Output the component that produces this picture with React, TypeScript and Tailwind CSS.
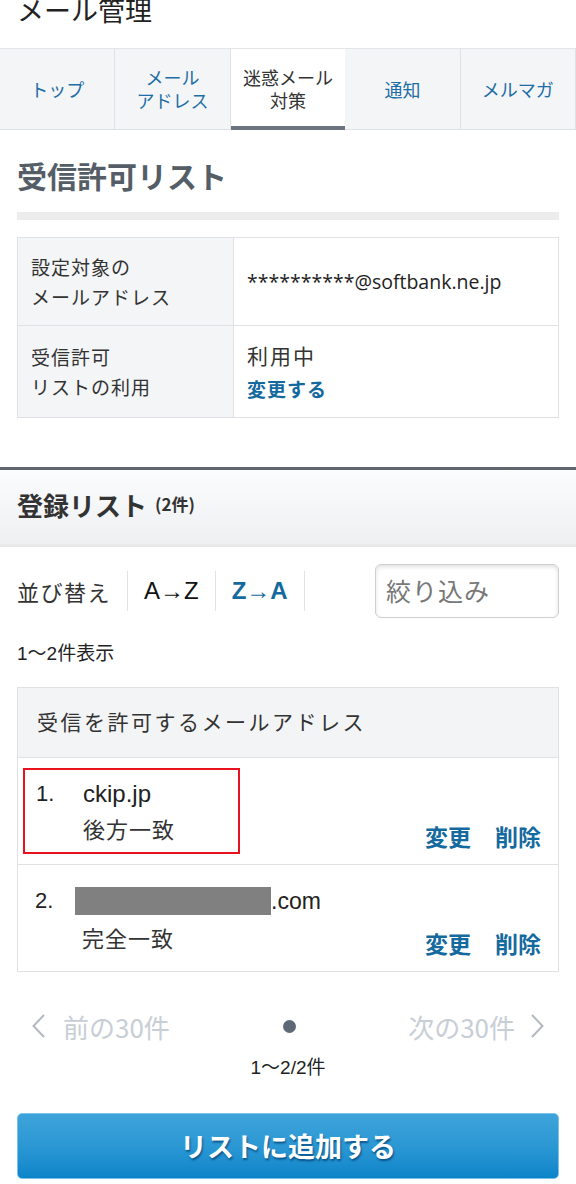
const jp = "font-['Noto_Sans_CJK_JP','Noto_Sans',sans-serif]";

const tabs = [
  { label: ["トップ"], active: false },
  { label: ["メール", "アドレス"], active: false },
  { label: ["迷惑メール", "対策"], active: true },
  { label: ["通知"], active: false },
  { label: ["メルマガ"], active: false },
];

function Links() {
  return (
    <div className="self-end mb-[13px] flex gap-[24px] text-[23px] leading-[30px] font-bold text-[#146a9e]">
      <span>変更</span>
      <span>削除</span>
    </div>
  );
}

export default function App() {
  return (
    <div className={`${jp} w-[576px] bg-white text-[#333] overflow-hidden`}>
      {/* page title (scrolled) */}
      <div className="h-[48px] overflow-hidden">
        <h1 className="-mt-[10px] pl-[17px] text-[27px] leading-[40px] text-[#222]">メール管理</h1>
      </div>

      {/* tabs */}
      <div className="flex h-[82px] border-t border-[#e3e5e8]">
        {tabs.map((t, i) => (
          <div
            key={i}
            className={
              t.active
                ? "flex-1 flex flex-col items-center justify-center bg-white border-b-[4px] border-[#6b7480] text-[#333] text-[18px] leading-[23px] pt-[2px]"
                : "flex-1 flex flex-col items-center justify-center bg-[#f4f5f7] border-r border-b border-[#dfe2e5] text-[#1d6ea5] text-[18px] leading-[23px]"
            }
          >
            {t.label.map((l) => (
              <span key={l}>{l}</span>
            ))}
          </div>
        ))}
      </div>

      {/* heading */}
      <div className="px-[17px]">
        <h2 className="mt-[25px] text-[30px] leading-[40px] font-bold text-[#555d67]">受信許可リスト</h2>
        <div className="mt-[17px] h-[8px] bg-[#ececec]" />

        <div className="mt-[17px] border border-[#dfe1e4]">
          <div className="flex h-[88px] border-b border-[#dfe1e4]">
            <div className="w-[216px] bg-[#f4f5f7] border-r border-[#dfe1e4] pl-[13px] flex flex-col justify-center text-[19px] tracking-[1px] leading-[30px] text-[#333]">
              <span>設定対象の</span>
              <span>メールアドレス</span>
            </div>
            <div className="flex-1 flex items-center pl-[13px] text-[19.5px] text-[#222] font-['Open_Sans',sans-serif]">
              **********@softbank.ne.jp
            </div>
          </div>
          <div className="flex h-[91px]">
            <div className="w-[216px] bg-[#f4f5f7] border-r border-[#dfe1e4] pl-[13px] flex flex-col justify-center text-[19px] tracking-[1px] leading-[30px] text-[#333]">
              <span>受信許可</span>
              <span>リストの利用</span>
            </div>
            <div className="flex-1 flex flex-col justify-center pl-[13px] leading-[33px]">
              <span className="text-[21px] tracking-[2px] text-[#333]">利用中</span>
              <span className="text-[19px] tracking-[1px] font-bold text-[#146a9e]">変更する</span>
            </div>
          </div>
        </div>
      </div>

      {/* registered list header */}
      <div className="mt-[49px] h-[80px] border-t-[3px] border-[#5f6670] border-b-[3px] border-b-[#e9e9e9] bg-gradient-to-b from-[#fbfcfd] to-[#eef0f2] flex items-center px-[17px] pb-[6px]">
        <span className="text-[26px] font-bold text-[#333]">登録リスト</span>
        <span className="ml-[8px] text-[17px] font-bold text-[#333]">(2件)</span>
      </div>

      {/* sort & filter */}
      <div className="mt-[17px] px-[17px] flex items-center h-[54px]">
        <span className="text-[22px] tracking-[1.5px] text-[#333] pr-[16px] border-r border-[#e3e3e3] leading-[40px]">並び替え</span>
        <span className="text-[24px] text-[#111] px-[16px] border-r border-[#e3e3e3] leading-[40px] font-['Liberation_Sans',sans-serif]">A→Z</span>
        <span className="text-[24px] font-bold text-[#146a9e] px-[16px] border-r border-[#e3e3e3] leading-[40px] font-['Liberation_Sans',sans-serif]">Z→A</span>
        <div className="ml-auto w-[184px] h-[54px] rounded-[6px] border border-[#cfcfcf] shadow-[inset_0_2px_4px_rgba(0,0,0,0.12)] flex items-center px-[10px] text-[25px] tracking-[1px] text-[#777]">
          絞り込み
        </div>
      </div>

      <div className="mt-[22px] px-[17px] text-[19px] text-[#222] font-['Liberation_Sans','Noto_Sans_CJK_JP',sans-serif]">1〜2件表示</div>

      {/* list */}
      <div className="mx-[17px] mt-[18px] border border-[#dfe1e4]">
        <div className="h-[70px] bg-[#f3f4f6] border-b border-[#dfe1e4] flex items-center pl-[19px] text-[21px] tracking-[2.5px] text-[#333]">
          受信を許可するメールアドレス
        </div>
        <div className="h-[107px] border-b border-[#dfe1e4] flex justify-between pl-[5px] pr-[17px] pt-[10px]">
          <div className="w-[217px] h-[86px] border-2 border-[#e8121e] flex flex-col justify-center pl-[11px]">
            <div className="flex items-center text-[24px] leading-[35px] text-[#222] font-['Liberation_Sans',sans-serif]">
              <span className="w-[47px] text-[22px]">1.</span>
              <span>ckip.jp</span>
            </div>
            <div className="pl-[47px] text-[22px] tracking-[1px] leading-[35px] text-[#333]">後方一致</div>
          </div>
          <Links />
        </div>
        <div className="h-[106px] flex justify-between px-[17px] pt-[18px]">
          <div className="flex flex-col">
            <div className="flex items-center text-[23px] leading-[36px] text-[#222] font-['Liberation_Sans',sans-serif]">
              <span className="w-[40px] text-[22px]">2.</span>
              <span className="inline-block w-[196px] h-[28px] bg-[#808080]" />
              <span>.com</span>
            </div>
            <div className="pl-[47px] text-[22px] tracking-[1px] leading-[36px] text-[#333]">完全一致</div>
          </div>
          <Links />
        </div>
      </div>

      {/* pagination */}
      <div className="mt-[35px] px-[32px] flex items-center justify-between text-[26px] text-[#c8ced5]">
        <div className="flex items-center gap-[18px]">
          <svg width="13" height="24" viewBox="0 0 13 24" fill="none" stroke="#b3b9c1" strokeWidth="2">
            <path d="M12 1 L1.5 12 L12 23" />
          </svg>
          <span>前の30件</span>
        </div>
        <span className="w-[13px] h-[13px] rounded-full bg-[#5d6977]" />
        <div className="flex items-center gap-[16px]">
          <span>次の30件</span>
          <svg width="13" height="24" viewBox="0 0 13 24" fill="none" stroke="#b3b9c1" strokeWidth="2">
            <path d="M1 1 L11.5 12 L1 23" />
          </svg>
        </div>
      </div>
      <div className="mt-[8px] text-center text-[19px] text-[#222] font-['Liberation_Sans','Noto_Sans_CJK_JP',sans-serif]">1〜2/2件</div>

      {/* add button */}
      <div className="mx-[17px] mt-[31px] mb-[10px] h-[66px] rounded-[5px] border border-[#7cc3ea] bg-gradient-to-b from-[#3ea3da] via-[#2b98d4] to-[#0a84c9] flex items-center justify-center text-[27px] font-bold text-white [text-shadow:1px_2px_2px_rgba(0,60,110,0.7)]">
        リストに追加する
      </div>
    </div>
  );
}
